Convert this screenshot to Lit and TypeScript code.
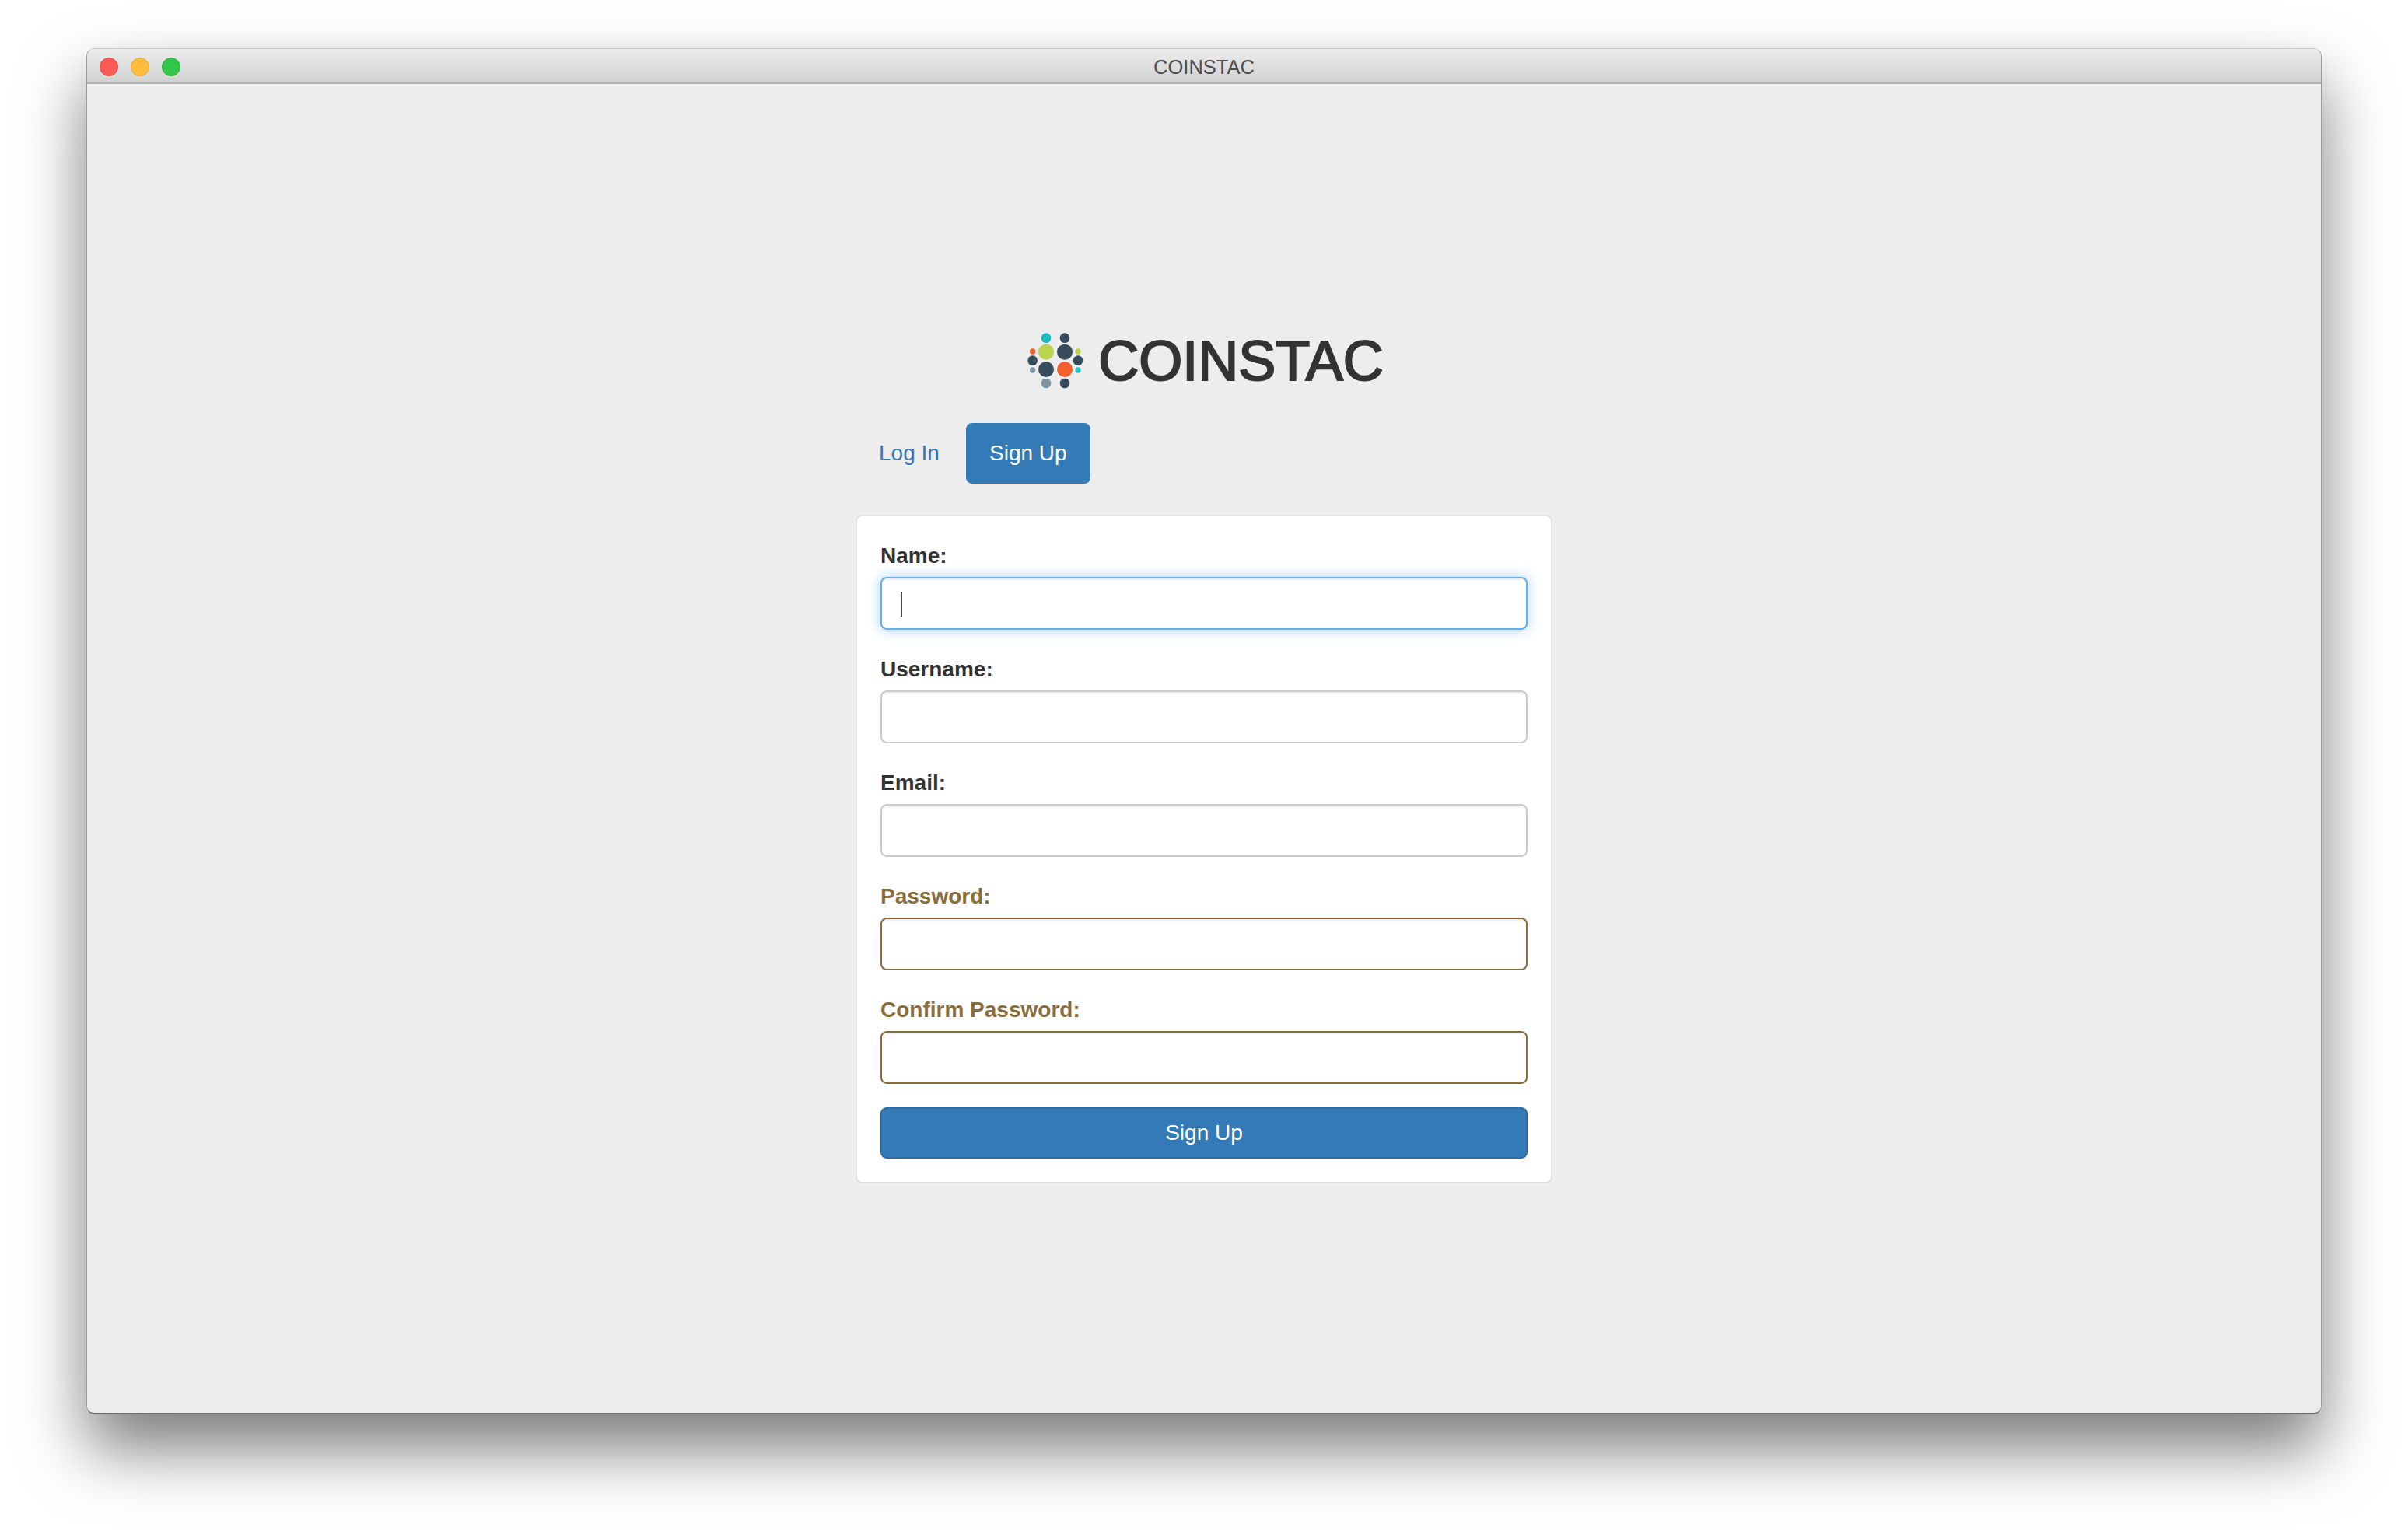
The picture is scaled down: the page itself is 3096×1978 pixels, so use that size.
import { LitElement, html, svg, css } from "lit";
import { customElement } from "lit/decorators.js";

const dots: [number, number, number, string][] = [
  [162, 74, 19, "#1cbbbd"], [234, 74, 19, "#374c5c"],
  [162, 128, 30, "#b9d54f"], [234, 128, 30, "#374c5c"],
  [110, 126, 11, "#f45f2f"], [285, 126, 11, "#b9d54f"],
  [110, 161, 19, "#374c5c"], [285, 161, 19, "#374c5c"],
  [110, 198, 11, "#7a94a1"], [285, 198, 11, "#1fc4c6"],
  [162, 195, 30, "#374c5c"], [234, 195, 30, "#f45f2f"],
  [162, 249, 19, "#7a94a1"], [234, 249, 19, "#374c5c"],
];

const fields = [
  { label: "Name:", state: "focus" },
  { label: "Username:", state: "" },
  { label: "Email:", state: "" },
  { label: "Password:", state: "warning" },
  { label: "Confirm Password:", state: "warning" },
];

@customElement("app-root")
export class AppRoot extends LitElement {
  static styles = css`
    :host {
      display: block;
      box-sizing: border-box;
      width: 3096px;
      height: 1978px;
      padding: 62px 111px 0;
      background: #fff;
      font-family: "Liberation Sans", Arial, sans-serif;
      overflow: hidden;
    }
    * { box-sizing: border-box; }
    .window {
      display: flex;
      flex-direction: column;
      width: 2874px;
      height: 1757px;
      border-radius: 10px;
      background: #ededed;
      overflow: hidden;
      border: 1px solid #9a9a9a;
      border-top-color: #c9c9c9;
      border-bottom: 2px solid #6e6e6e;
    }
    .shadow {
      border-radius: 10px;
      box-shadow: 0 44px 84px rgba(0, 0, 0, 0.52);
    }
    .titlebar {
      position: relative;
      display: flex;
      align-items: center;
      justify-content: center;
      flex: none;
      height: 45px;
      padding-top: 3px;
      background: linear-gradient(#ebebeb, #d2d2d2);
      border-bottom: 2px solid #b4b4b4;
      font-size: 25.5px;
      color: #4d4d4d;
    }
    .lights {
      position: absolute;
      left: 16px;
      top: 11px;
      display: flex;
      gap: 16px;
    }
    .light {
      width: 24px;
      height: 24px;
      border-radius: 50%;
      border: 1px solid;
    }
    .red { background: #fc5b57; border-color: #e2463f; }
    .yellow { background: #ffbd3b; border-color: #e09e2a; }
    .green { background: #33c84a; border-color: #28a93a; }
    .body {
      flex: 1;
      display: flex;
      flex-direction: column;
      align-items: center;
      padding-top: 312px;
    }
    .content { width: 896px; }
    .brand {
      display: flex;
      align-items: center;
      justify-content: center;
      gap: 19px;
      height: 88px;
      padding-left: 4px;
      font-size: 72px;
      color: #333;
      -webkit-text-stroke: 2.2px #333;
    }
    .brand svg { width: 72px; height: 72px; flex: none; }
    .tabs {
      display: flex;
      gap: 4px;
      margin-top: 36px;
    }
    .tab {
      height: 78px;
      padding: 0 30px;
      display: flex;
      align-items: center;
      justify-content: center;
      border-radius: 8px;
      font-size: 28px;
      color: #337ab7;
      text-decoration: none;
    }
    .tab.active { min-width: 160px; background: #337ab7; color: #fff; }
    .card {
      margin-top: 40px;
      background: #fff;
      border: 2px solid #e0e0e0;
      border-radius: 8px;
      padding: 30px;
    }
    .group { margin-bottom: 30px; }
    .group label {
      display: block;
      height: 40px;
      line-height: 42px;
      margin-bottom: 8px;
      font-size: 28px;
      font-weight: 700;
      color: #333;
    }
    .box { position: relative; }
    .box input {
      display: block;
      width: 100%;
      height: 68px;
      padding: 12px 24px;
      border: 2px solid #ccc;
      border-radius: 8px;
      background: #fff;
      outline: none;
      font: 28px "Liberation Sans", Arial, sans-serif;
      color: #555;
      caret-color: transparent;
      box-shadow: inset 0 2px 2px rgba(0, 0, 0, 0.075);
    }
    .group.focus input {
      border-color: #66afe9;
      box-shadow: inset 0 2px 2px rgba(0, 0, 0, 0.075), 0 0 16px rgba(102, 175, 233, 0.6);
    }
    .group.warning label { color: #8a6d3b; }
    .group.warning input { border-color: #8a6d3b; }
    .caret {
      position: absolute;
      left: 26px;
      top: 19px;
      width: 2px;
      height: 32px;
      background: #4d4d4d;
    }
    .submit {
      display: block;
      width: 100%;
      height: 66px;
      border: 2px solid #2e6da4;
      border-radius: 8px;
      background: #337ab7;
      color: #fff;
      font: 28px "Liberation Sans", Arial, sans-serif;
    }
  `;

  render() {
    return html`
      <div class="shadow">
        <div class="window">
          <div class="titlebar">
            <div class="lights">
              <span class="light red"></span>
              <span class="light yellow"></span>
              <span class="light green"></span>
            </div>
            COINSTAC
          </div>
          <div class="body">
            <div class="content">
              <div class="brand">
                <svg viewBox="90 54 216 216" aria-hidden="true">
                  ${dots.map(
                    ([x, y, r, c]) =>
                      svg`<circle cx=${x} cy=${y} r=${r} fill=${c}></circle>`
                  )}
                </svg>
                <span>COINSTAC</span>
              </div>
              <nav class="tabs">
                <a class="tab">Log In</a>
                <a class="tab active">Sign Up</a>
              </nav>
              <form class="card">
                ${fields.map(
                  (f) => html`
                    <div class="group ${f.state}">
                      <label>${f.label}</label>
                      <div class="box">
                        <input type="text" />
                        ${f.state === "focus"
                          ? html`<span class="caret"></span>`
                          : ""}
                      </div>
                    </div>
                  `
                )}
                <button class="submit" type="button">Sign Up</button>
              </form>
            </div>
          </div>
        </div>
      </div>
    `;
  }
}
